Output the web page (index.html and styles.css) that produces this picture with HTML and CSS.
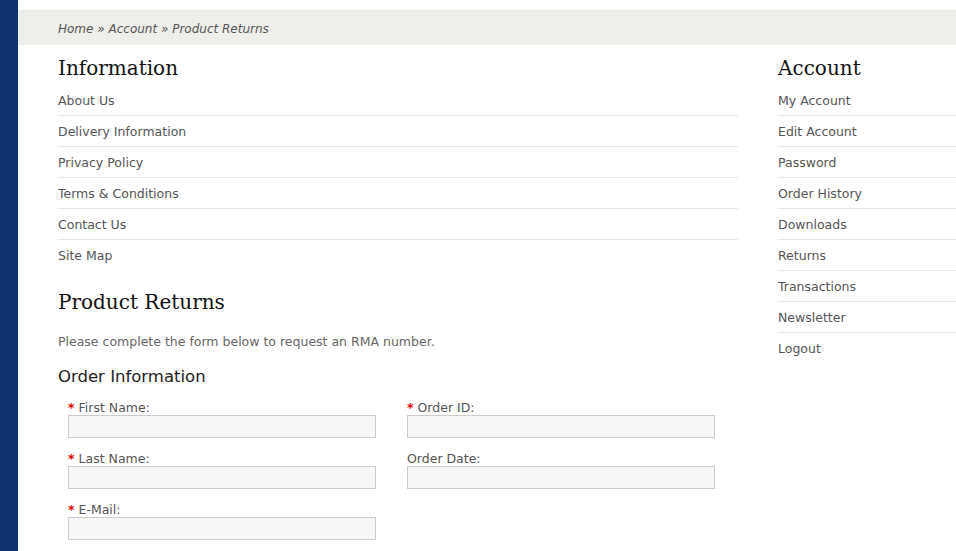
FILE: index.html
```html
<!DOCTYPE html>
<html>
<head>
<meta charset="utf-8">
<link rel="stylesheet" href="styles.css">
</head>
<body>
<div class="page">
  <div class="side"></div>
  <div class="main">
    <div class="crumbs">Home » Account » Product Returns</div>
    <div class="content">
      <div class="left">
        <h2 class="title">Information</h2>
        <ul class="links">
          <li>About Us</li>
          <li>Delivery Information</li>
          <li>Privacy Policy</li>
          <li>Terms &amp; Conditions</li>
          <li>Contact Us</li>
          <li>Site Map</li>
        </ul>
        <h2 class="title title-returns">Product Returns</h2>
        <p class="intro">Please complete the form below to request an RMA number.</p>
        <h3 class="sub">Order Information</h3>
        <div class="form">
          <div class="field"><label><span class="req">*</span> First Name:</label><div class="input"></div></div>
          <div class="field"><label><span class="req">*</span> Order ID:</label><div class="input"></div></div>
          <div class="field"><label><span class="req">*</span> Last Name:</label><div class="input"></div></div>
          <div class="field"><label>Order Date:</label><div class="input"></div></div>
          <div class="field"><label><span class="req">*</span> E-Mail:</label><div class="input"></div></div>
        </div>
      </div>
      <div class="right">
        <h2 class="title">Account</h2>
        <ul class="links">
          <li>My Account</li>
          <li>Edit Account</li>
          <li>Password</li>
          <li>Order History</li>
          <li>Downloads</li>
          <li>Returns</li>
          <li>Transactions</li>
          <li>Newsletter</li>
          <li>Logout</li>
        </ul>
      </div>
    </div>
  </div>
</div>
</body>
</html>
```
FILE: styles.css
```css
html, body {
  margin: 0;
  padding: 0;
  background: #fff;
  overflow: hidden;
}
body {
  font-family: "DejaVu Sans", Verdana, sans-serif;
  font-size: 12.5px;
  color: #555;
}
.page {
  display: flex;
  height: 551px;
}
.side {
  width: 18px;
  flex: 0 0 18px;
  background: #0f3370;
}
.main {
  flex: 1;
  min-width: 0;
  padding-top: 10px;
}
.crumbs {
  height: 35px;
  line-height: 36px;
  padding-left: 40px;
  background: #eeeeea;
  border-top: 1px solid #e6e6e2;
  box-sizing: border-box;
  font-style: italic;
  color: #555;
  font-size: 12px;
}
.content {
  display: flex;
  gap: 40px;
  padding-left: 40px;
}
.left {
  width: 680px;
  flex: 0 0 680px;
}
.right {
  flex: 1;
  min-width: 0;
  margin-right: -40px;
}
.title {
  margin: 10px 0 0;
  padding-bottom: 3px;
  font-family: Georgia, "DejaVu Serif", serif;
  font-weight: normal;
  font-size: 20px;
  line-height: 27px;
  color: #111;
}
.title-returns {
  margin-top: 19px;
  padding-bottom: 1px;
}
.links {
  list-style: none;
  margin: 0;
  padding: 0;
}
.links li {
  height: 30px;
  line-height: 32px;
  border-bottom: 1px solid #e8e8e8;
}
.links li:last-child {
  border-bottom: none;
}
.intro {
  margin: 14px 0 0;
  line-height: 22px;
  color: #666;
}
.sub {
  margin: 11px 0 0;
  font-weight: normal;
  font-size: 16.5px;
  line-height: 26px;
  color: #222;
}
.form {
  margin-top: 10px;
  padding-left: 10px;
  display: grid;
  grid-template-columns: 308px 308px;
  column-gap: 31px;
  row-gap: 13px;
}
.field label {
  display: block;
  height: 15px;
  line-height: 16px;
  color: #555;
}
.req {
  color: #e00000;
  font-weight: bold;
}
.input {
  height: 23px;
  box-sizing: border-box;
  border: 1px solid #cccccc;
  background: #f7f7f7;
}
```
